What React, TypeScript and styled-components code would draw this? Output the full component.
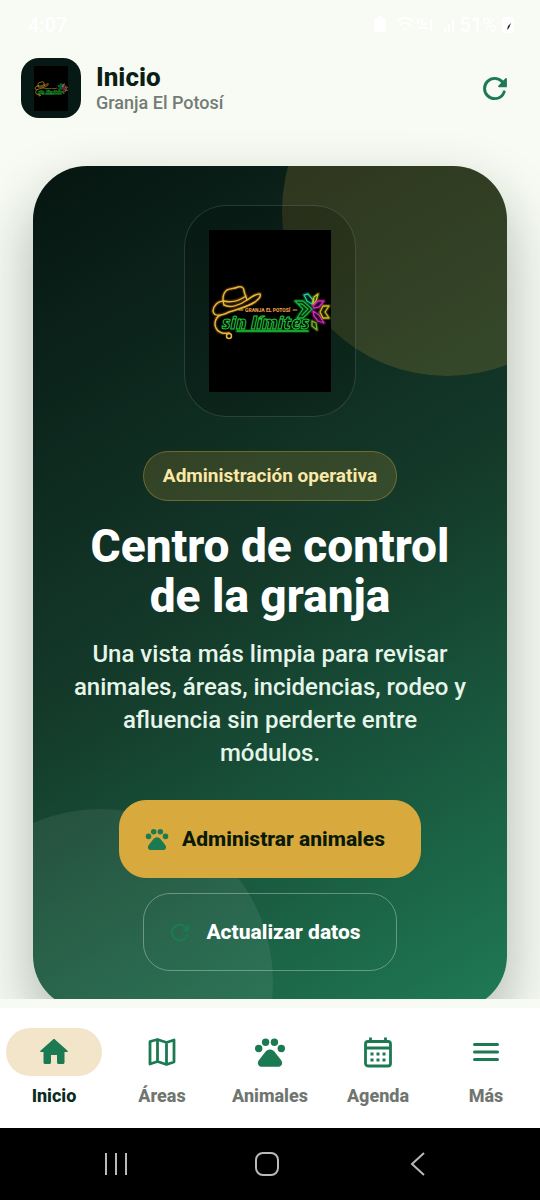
import React from 'react';
import styled, { createGlobalStyle, css } from 'styled-components';

const GlobalStyle = createGlobalStyle`
  *, *::before, *::after { box-sizing: border-box; }
  body { margin: 0; background: #f7fbf3; font-family: Roboto, sans-serif; }
  button { font-family: inherit; }
  h1, h2, p { margin: 0; }
`;

const Screen = styled.div`
  height: 100vh;
  display: flex;
  flex-direction: column;
  background: #f7fbf3;
`;

const StatusBar = styled.div`
  display: flex;
  justify-content: space-between;
  align-items: center;
  height: 50px;
  padding: 0 26px 0 28px;
  color: #ffffff;
  font-size: 20px;
  font-weight: 500;
  flex: none;
`;

const StatusIcons = styled.div`
  display: flex;
  align-items: center;
  gap: 5px;
`;

const Header = styled.header`
  display: flex;
  align-items: center;
  gap: 15px;
  padding: 8px 21px 0;
  flex: none;
`;

const Avatar = styled.div`
  display: flex;
  align-items: center;
  justify-content: center;
  width: 60px;
  height: 60px;
  border-radius: 18px;
  background: #061914;
`;

const Heading = styled.div`
  flex: 1;
`;

const PageTitle = styled.h1`
  font-size: 26px;
  line-height: 30px;
  font-weight: 800;
  color: #0b1f17;
`;

const PageSubtitle = styled.p`
  font-size: 18px;
  line-height: 22px;
  font-weight: 500;
  color: #747b75;
`;

const IconButton = styled.button`
  display: flex;
  align-items: center;
  justify-content: center;
  width: 48px;
  height: 48px;
  padding: 0;
  border: 0;
  background: none;
  color: #1c7a52;
`;

const Content = styled.main`
  flex: 1;
  min-height: 0;
  overflow: auto;
  scrollbar-width: none;
  padding: 48px 33px;
`;

const HeroShadow = styled.div`
  border-radius: 54px;
  box-shadow: 0 27px 60px rgba(6, 25, 20, 0.3);
`;

const Hero = styled.section`
  position: relative;
  overflow: hidden;
  display: flex;
  flex-direction: column;
  align-items: center;
  padding: 39px 38px;
  border-radius: 54px;
  background: linear-gradient(150deg, #061511 0%, #143a2a 50%, #1f7a55 100%);
  text-align: center;
`;

const Glow = styled.span<{ $place: 'top' | 'bottom' }>`
  position: absolute;
  border-radius: 50%;
  ${({ $place }) =>
    $place === 'top'
      ? css`
          top: -120px;
          right: -105px;
          width: 330px;
          height: 330px;
          background: rgba(216, 169, 60, 0.18);
        `
      : css`
          bottom: -144px;
          left: -105px;
          width: 345px;
          height: 345px;
          background: rgba(255, 255, 255, 0.07);
        `}
`;

const LogoFrame = styled.div`
  position: relative;
  display: flex;
  padding: 24px;
  border: 1px solid rgba(255, 255, 255, 0.13);
  border-radius: 42px;
  background: rgba(0, 0, 0, 0.16);
`;

const Badge = styled.span`
  position: relative;
  margin-top: 34px;
  padding: 12px 19px;
  border: 1px solid rgba(216, 169, 60, 0.36);
  border-radius: 25px;
  background: rgba(216, 169, 60, 0.18);
  color: #fbe8a6;
  font-size: 19px;
  line-height: 24px;
  font-weight: 700;
`;

const HeroTitle = styled.h2`
  position: relative;
  margin-top: 20px;
  color: #ffffff;
  font-size: 46px;
  line-height: 50px;
  font-weight: 800;
`;

const HeroText = styled.p`
  position: relative;
  margin-top: 17px;
  color: #e6f5e9;
  font-size: 24px;
  line-height: 33px;
  font-weight: 500;
`;

const Actions = styled.div`
  position: relative;
  display: flex;
  flex-direction: column;
  align-items: center;
  gap: 15px;
  margin-top: 30px;
`;

const Action = styled.button<{ $filled?: boolean }>`
  display: flex;
  align-items: center;
  gap: 13px;
  height: 78px;
  padding: 0 35px 0 24px;
  border: 1px solid ${({ $filled }) => ($filled ? '#d8a93c' : 'rgba(255, 255, 255, 0.32)')};
  border-radius: 27px;
  background: ${({ $filled }) => ($filled ? '#d8a93c' : 'transparent')};
  color: ${({ $filled }) => ($filled ? '#0b1a08' : '#ffffff')};
  font-size: 21px;
  font-weight: 800;
`;

const ActionIcon = styled.span`
  display: flex;
  justify-content: center;
  width: 25px;
  color: #1c7a52;
`;

const TabBar = styled.nav`
  display: grid;
  grid-template-columns: repeat(5, 1fr);
  flex: none;
  margin-top: 9px;
  padding: 20px 0;
  background: #ffffff;
`;

const Tab = styled.a<{ $active?: boolean }>`
  display: flex;
  flex-direction: column;
  align-items: center;
  gap: 8px;
  color: ${({ $active }) => ($active ? '#082c20' : '#6f766f')};
  font-size: 18px;
  line-height: 24px;
  font-weight: 800;
  text-decoration: none;
`;

const TabIcon = styled.span<{ $active?: boolean }>`
  display: flex;
  align-items: center;
  justify-content: center;
  width: 96px;
  height: 48px;
  border-radius: 24px;
  background: ${({ $active }) => ($active ? '#f3e5c9' : 'transparent')};
  color: #1c7a52;
`;

const SystemBar = styled.div`
  display: grid;
  grid-template-columns: repeat(3, 1fr);
  align-items: center;
  justify-items: center;
  flex: none;
  height: 72px;
  padding: 0 46px 0 40px;
  background: #000000;
`;

const SystemButton = styled.button`
  display: flex;
  padding: 0;
  border: 0;
  background: none;
  color: #b9b9b9;
`;

const hatPath =
  'M15 75C13 68 14 63 18 60c4-2 7-1 11-3 4-1 6 1 6 4 1 4 2 6 3 9M15 71C8 71 4 77 4 81c1 6 8 5 16 1 12-4 18-5 26-10 4-3 6-6 5-8-4-1-8 3-13 6-8 6-17 8-23 5M15 71c7 2 15 0 22-5M12 85c-6 2-7 9-5 13 2 5 8 6 13 5';

const starPaths = [
  { color: '#19b63b', d: 'M86 71h8l9 8-9 9h-6l6-9ZM89 74h4l6 5-6 6' },
  { color: '#22c890', d: 'M95 65l4-1 5 6-1 4-5-3Z' },
  { color: '#c8c822', d: 'M105 67l4-3-2 7-3 3Z' },
  { color: '#d527bf', d: 'M104 76l5-5h6l-5 6-5 1ZM104 81l6 4 5 8-6-2-4-5Z' },
  { color: '#d2bd22', d: 'M111 82l3-6h6l-4 6 4 6h-6Z' },
  { color: '#78b827', d: 'M103 91l4 2 1 7-5-4Z' },
];

function Logo({ width }: { width: number }) {
  return (
    <svg width={width} height={Math.round((width * 162) / 122)} viewBox="0 0 122 162" role="img" aria-label="Granja El Potosí sin límites">
      <rect width="122" height="162" fill="#000" />
      <g fill="none" strokeLinecap="round" strokeLinejoin="round">
        <path d={hatPath} stroke="#8a5a10" strokeWidth="4" opacity="0.4" />
        <g stroke="#e9b53a" strokeWidth="1.5">
          <path d={hatPath} />
          <circle cx="20" cy="106" r="2.5" />
          <path d="M30 80h4M84 80h4" strokeWidth="1" />
        </g>
        <path d="M28 101h71" stroke="#087b20" strokeWidth="4" opacity="0.45" />
        <path d="M28 101h71" stroke="#20c63b" strokeWidth="1.4" />
        {starPaths.map(({ color, d }) => (
          <g key={color} stroke={color}>
            <path d={d} strokeWidth="4" opacity="0.25" />
            <path d={d} strokeWidth="1.3" />
          </g>
        ))}
      </g>
      <text x="36" y="82" fill="#f0a04a" fontFamily="Roboto, sans-serif" fontSize="5" fontWeight="800">GRANJA EL POTOSÍ</text>
      <text x="13" y="99" fill="#031807" stroke="#23c63e" strokeWidth="1" fontFamily="'Open Sans', sans-serif" fontSize="17" fontStyle="italic" fontWeight="800">sin límites</text>
    </svg>
  );
}

const ReloadIcon = ({ size }: { size: number }) => (
  <svg width={size} height={size} viewBox="0 0 512 512" aria-hidden="true">
    <path d="M400 148l-21.12-24.57A191.43 191.43 0 00240 64C134 64 48 150 48 256s86 192 192 192a192.09 192.09 0 00181.07-128" fill="none" stroke="currentColor" strokeWidth="56" strokeLinecap="round" />
    <path d="M472 74V216a16 16 0 01-16 16H322c-14.260 0-21.460-17.230-11.410-27.310L445 63c10-10 27-3 27 11z" fill="currentColor" />
  </svg>
);

const PawIcon = ({ size }: { size: number }) => (
  <svg width={size} height={size} viewBox="0 0 32 32" fill="currentColor" aria-hidden="true">
    <circle cx="4.700" cy="12.500" r="3.700" />
    <circle cx="11.600" cy="6.200" r="3.700" />
    <circle cx="20.400" cy="6.200" r="3.700" />
    <circle cx="27.300" cy="12.500" r="3.700" />
    <path d="M16 13.500c-2.500 0-4 1.500-5.500 3.500L5 24c-2.500 3.500-.5 6.800 3 6.800h16c3.500 0 5.500-3.300 3-6.800l-5.500-7c-1.500-2-3-3.500-5.500-3.500Z" />
  </svg>
);

const HomeIcon = () => (
  <svg width="36" height="36" viewBox="0 0 24 24" fill="currentColor" aria-hidden="true">
    <path d="M10 19v-5h4v5c0 .55.45 1 1 1h3c.55 0 1-.45 1-1v-7h1.700c.46 0 .68-.57.33-.87L12.670 3.600c-.38-.34-.96-.34-1.340 0l-8.360 7.530c-.34.3-.13.87.33.87H5v7c0 .55.45 1 1 1h3c.55 0 1-.45 1-1z" />
  </svg>
);

const MapIcon = () => (
  <svg width="28" height="28" viewBox="0 0 28 28" fill="none" stroke="currentColor" strokeWidth="2.800" strokeLinejoin="round" aria-hidden="true">
    <path d="M2 3.500L9.500 1.500L18.500 4.500L26 2V24L18.500 26.500L9.500 23.500L2 26ZM9.500 1.500V23.500M18.500 4.500V26.500" />
  </svg>
);

const CalendarIcon = () => (
  <svg width="28" height="31" viewBox="0 0 28 31" fill="none" stroke="currentColor" strokeWidth="2.800" aria-hidden="true">
    <rect x="1.500" y="4.500" width="25" height="24.500" rx="2.500" />
    <path d="M2 11h24M6.500 0.500V5M21.500 0.500V5" />
    <path d="M6.500 17h3M12.500 17h3M18.500 17h3M6.500 23h3M12.500 23h3M18.500 23h3" strokeWidth="3" />
  </svg>
);

const MenuIcon = () => (
  <svg width="28" height="20" viewBox="0 0 28 20" stroke="currentColor" strokeWidth="3" strokeLinecap="round" aria-hidden="true">
    <path d="M2.500 2.500h23M2.500 10h23M2.500 17.500h23" />
  </svg>
);

const tabs = [
  { label: 'Inicio', icon: <HomeIcon /> },
  { label: 'Áreas', icon: <MapIcon /> },
  { label: 'Animales', icon: <PawIcon size={32} /> },
  { label: 'Agenda', icon: <CalendarIcon /> },
  { label: 'Más', icon: <MenuIcon /> },
];

export default function App() {
  return (
    <Screen>
      <GlobalStyle />
      <StatusBar>
        <span>4:07</span>
        <StatusIcons>
          <svg width="82" height="18" viewBox="0 0 82 18" aria-hidden="true">
            <path d="M3 2h2V0h4v2h2q2 0 2 2v10q0 2-2 2H3q-2 0-2-2V4q0-2 2-2Z" fill="#fff" />
            <path d="M24 5q8-6 16 0M27 9q5-4 10 0M31 13h3M45 3v5M49 3v5h5M45 12h10M58 3v12M72 12v4M76 8v8M80 3v13" fill="none" stroke="#fff" strokeWidth="2" />
          </svg>
          <span>51%</span>
          <svg width="12" height="16" viewBox="0 0 12 16" aria-hidden="true">
            <rect width="12" height="16" rx="3" fill="#fff" />
            <path d="M5 13l1-4 3-3-2 5Z" fill="#222" />
          </svg>
        </StatusIcons>
      </StatusBar>
      <Header>
        <Avatar><Logo width={34} /></Avatar>
        <Heading>
          <PageTitle>Inicio</PageTitle>
          <PageSubtitle>Granja El Potosí</PageSubtitle>
        </Heading>
        <IconButton aria-label="Actualizar"><ReloadIcon size={27} /></IconButton>
      </Header>
      <Content>
        <HeroShadow>
          <Hero>
            <Glow $place="top" />
            <Glow $place="bottom" />
            <LogoFrame><Logo width={122} /></LogoFrame>
            <Badge>Administración operativa</Badge>
            <HeroTitle>Centro de control de la granja</HeroTitle>
            <HeroText>Una vista más limpia para revisar animales, áreas, incidencias, rodeo y afluencia sin perderte entre módulos.</HeroText>
            <Actions>
              <Action $filled><ActionIcon><PawIcon size={24} /></ActionIcon>Administrar animales</Action>
              <Action><ActionIcon><ReloadIcon size={21} /></ActionIcon>Actualizar datos</Action>
            </Actions>
          </Hero>
        </HeroShadow>
      </Content>
      <TabBar>
        {tabs.map(({ label, icon }, i) => (
          <Tab key={label} href="#" $active={i === 0} aria-current={i === 0 ? 'page' : undefined}>
            <TabIcon $active={i === 0}>{icon}</TabIcon>
            {label}
          </Tab>
        ))}
      </TabBar>
      <SystemBar>
        <SystemButton aria-label="Recientes">
          <svg width="24" height="24" viewBox="0 0 24 24" stroke="currentColor" strokeWidth="2"><path d="M2 1v22M12 1v22M22 1v22" /></svg>
        </SystemButton>
        <SystemButton aria-label="Inicio del sistema">
          <svg width="24" height="24" viewBox="0 0 24 24" fill="none" stroke="currentColor" strokeWidth="2"><rect x="1" y="1" width="22" height="22" rx="7" /></svg>
        </SystemButton>
        <SystemButton aria-label="Atrás">
          <svg width="24" height="24" viewBox="0 0 24 24" fill="none" stroke="currentColor" strokeWidth="2"><path d="M18 1L6 12l12 11" /></svg>
        </SystemButton>
      </SystemBar>
    </Screen>
  );
}
